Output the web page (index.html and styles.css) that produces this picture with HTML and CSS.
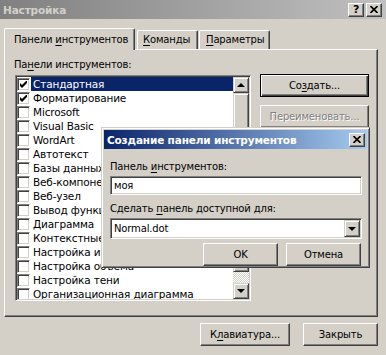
FILE: index.html
```html
<!DOCTYPE html>
<html lang="ru">
<head>
  <meta charset="UTF-8">
  <title>Настройка</title>
  <link rel="stylesheet" href="styles.css">
</head>
<body>
<div class="window">
  <div class="titlebar">
    <span class="title">Настройка</span>
    <div class="caption-buttons">
      <span class="cap-btn help">?</span>
      <span class="cap-btn">
        <svg width="8" height="7" viewBox="0 0 8 7"><path d="M0.5 0 L7.5 7 M7.5 0 L0.5 7" stroke="#000" stroke-width="1.6"/></svg>
      </span>
    </div>
  </div>

  <div class="tabs">
    <div class="tab active">Панели <u>и</u>нструментов</div>
    <div class="tab tab-cmd"><u>К</u>оманды</div>
    <div class="tab tab-opt"><u>П</u>араметры</div>
  </div>

  <div class="panel">
    <div class="label">Па<u>н</u>ели инструментов:</div>
    <div class="panel-row">
      <div class="listbox">
        <ul class="items">
          <li class="selected"><span class="check on"></span><span class="text">Стандартная</span></li>
          <li><span class="check on"></span><span class="text">Форматирование</span></li>
          <li><span class="check"></span><span class="text">Microsoft</span></li>
          <li><span class="check"></span><span class="text">Visual Basic</span></li>
          <li><span class="check"></span><span class="text">WordArt</span></li>
          <li><span class="check"></span><span class="text">Автотекст</span></li>
          <li><span class="check"></span><span class="text">Базы данных</span></li>
          <li><span class="check"></span><span class="text">Веб-компоненты</span></li>
          <li><span class="check"></span><span class="text">Веб-узел</span></li>
          <li><span class="check"></span><span class="text">Вывод функциональных клавиш</span></li>
          <li><span class="check"></span><span class="text">Диаграмма</span></li>
          <li><span class="check"></span><span class="text">Контекстные меню</span></li>
          <li><span class="check"></span><span class="text">Настройка изображения</span></li>
          <li><span class="check"></span><span class="text">Настройка объема</span></li>
          <li><span class="check"></span><span class="text">Настройка тени</span></li>
          <li><span class="check"></span><span class="text">Организационная диаграмма</span></li>
        </ul>
        <div class="scrollbar">
          <div class="sb-btn"><span class="arrow-up"></span></div>
          <div class="sb-thumb"></div>
          <div class="sb-track"></div>
          <div class="sb-btn"><span class="arrow-down"></span></div>
        </div>
      </div>
      <div class="side-buttons">
        <button class="btn default">Со<u>з</u>дать...</button>
        <button class="btn" disabled>Переименовать...</button>
      </div>
    </div>
  </div>

  <div class="footer">
    <button class="btn btn-kbd">К<u>л</u>авиатура...</button>
    <button class="btn btn-close">Закрыть</button>
  </div>

  <!-- диалог поверх окна -->
  <div class="dialog">
    <div class="dlg-title">
      <span>Создание панели инструментов</span>
      <span class="cap-btn">
        <svg width="8" height="7" viewBox="0 0 8 7"><path d="M0.5 0 L7.5 7 M7.5 0 L0.5 7" stroke="#000" stroke-width="1.6"/></svg>
      </span>
    </div>
    <div class="dlg-body">
      <div class="dlg-label">Панель <u>и</u>нструментов:</div>
      <div class="field">моя</div>
      <div class="dlg-label second">Сделать <u>п</u>анель доступной для:</div>
      <div class="field combo">
        <span>Normal.dot</span>
        <span class="sb-btn combo-btn"><span class="arrow-down"></span></span>
      </div>
      <div class="dlg-buttons">
        <button class="btn">OK</button>
        <button class="btn">Отмена</button>
      </div>
    </div>
  </div>
</div>
</body>
</html>
```

FILE: styles.css
```css
* {
  box-sizing: border-box;
}

body {
  margin: 0;
  background: #d4d0c8;
  font-family: "DejaVu Sans", sans-serif;
  font-size: 10px;
  letter-spacing: -0.15px;
  color: #000;
}

u {
  text-decoration-thickness: 1px;
  text-underline-offset: 2px;
}

.window {
  position: relative;
  width: 386px;
  height: 355px;
  background: #d4d0c8;
}

.titlebar {
  height: 19px;
  display: flex;
  align-items: center;
  justify-content: space-between;
  padding: 0 4px 0 3px;
  background: linear-gradient(to right, #808080, #c0c0c0);
}

.title {
  font-weight: bold;
  font-size: 10.5px;
  color: #d4d0c8;
}

.caption-buttons {
  display: flex;
  gap: 2px;
}

.cap-btn {
  width: 16px;
  height: 14px;
  display: flex;
  align-items: center;
  justify-content: center;
  background: #d4d0c8;
  border: 1px solid;
  border-color: #fff #404040 #404040 #fff;
  box-shadow: inset -1px -1px #808080;
}

.help {
  font-weight: bold;
  font-size: 11px;
  line-height: 1;
}

/* вкладки */
.tabs {
  height: 30px;
  display: flex;
  align-items: flex-end;
  padding-left: 4px;
}

.tab {
  position: relative;
  height: 19px;
  padding: 3px 0 0 7px;
  white-space: nowrap;
  background: #d4d0c8;
  border: 1px solid;
  border-bottom: none;
  border-color: #fff #404040 #404040 #fff;
  border-radius: 2px 2px 0 0;
  box-shadow: inset -1px 0 #808080;
}

.tab.active {
  width: 131px;
  height: 22px;
  margin-bottom: -1px;
  padding: 5px 0 0 9px;
  z-index: 1;
}

.tab-cmd {
  width: 61px;
  margin-left: 2px;
  padding-left: 5px;
}

.tab-opt {
  width: 71px;
  margin-left: 1px;
  padding-left: 6px;
}

.panel {
  margin-left: 4px;
  width: 374px;
  height: 268px;
  border: 1px solid;
  border-color: #fff #404040 #404040 #fff;
  box-shadow: inset -1px -1px #808080;
  padding: 8px 0 0 10px;
}

.label {
  height: 13px;
  line-height: 13px;
  margin: 0 0 4px -1px;
}

.panel-row {
  display: flex;
  gap: 9px;
}

/* список */
.listbox {
  width: 236px;
  height: 226px;
  display: flex;
  padding: 1px;
  background: #fff;
  border: 1px solid;
  border-color: #808080 #fff #fff #808080;
  box-shadow: inset 1px 1px #404040, inset -1px -1px #d4d0c8;
  overflow: hidden;
}

.items {
  list-style: none;
  margin: 0;
  padding: 0;
  flex: 1;
  overflow: hidden;
}

.items li {
  height: 14px;
  display: flex;
  align-items: center;
  white-space: nowrap;
}

.check {
  flex: none;
  width: 13px;
  height: 13px;
  margin-right: 1px;
  background: #fff;
  border: 1px solid;
  border-color: #808080 #fff #fff #808080;
  box-shadow: inset 1px 1px #404040, inset -1px -1px #d4d0c8;
}

.check.on {
  background: #fff url("data:image/svg+xml;utf8,<svg xmlns='http://www.w3.org/2000/svg' width='7' height='7'><path d='M0 2 L2 4 L7 -1 L7 2 L2 7 L0 5 Z' fill='black'/></svg>") no-repeat 2px 2px;
}

.text {
  height: 14px;
  line-height: 14px;
  padding: 0 2px;
  font-size: 10.5px;
}

.selected .text {
  flex: 1;
  background: #0a246a;
  color: #fff;
}

.scrollbar {
  width: 16px;
  display: flex;
  flex-direction: column;
}

.sb-btn {
  width: 16px;
  height: 16px;
  flex: none;
  display: flex;
  align-items: center;
  justify-content: center;
  background: #d4d0c8;
  border: 1px solid;
  border-color: #d4d0c8 #404040 #404040 #d4d0c8;
  box-shadow: inset 1px 1px #fff, inset -1px -1px #808080;
}

.arrow-up,
.arrow-down {
  width: 0;
  height: 0;
  border-left: 4px solid transparent;
  border-right: 4px solid transparent;
}

.arrow-up {
  border-bottom: 4px solid #000;
}

.arrow-down {
  border-top: 4px solid #000;
}

.sb-thumb {
  height: 179px;
  background: #d4d0c8;
  border: 1px solid;
  border-color: #d4d0c8 #404040 #404040 #d4d0c8;
  box-shadow: inset 1px 1px #fff, inset -1px -1px #808080;
}

.sb-track {
  flex: 1;
  background: repeating-conic-gradient(#fff 0 25%, #d4d0c8 0 50%) 0 0 / 2px 2px;
}

/* кнопки */
.btn {
  height: 23px;
  padding: 0;
  font-family: inherit;
  font-size: 10px;
  letter-spacing: -0.15px;
  color: #000;
  background: #d4d0c8;
  border: 1px solid;
  border-color: #fff #404040 #404040 #fff;
  box-shadow: inset -1px -1px #808080;
}

.btn.default {
  border-color: #000;
  box-shadow: inset 1px 1px #fff, inset -1px -1px #404040, inset -2px -2px #808080;
}

.btn:disabled {
  color: #808080;
  text-shadow: 1px 1px #fff;
}

.side-buttons {
  display: flex;
  flex-direction: column;
  gap: 8px;
  margin-top: -1px;
}

.side-buttons .btn {
  width: 109px;
}

.footer {
  display: flex;
  justify-content: flex-end;
  gap: 13px;
  padding: 6px 8px 0 0;
}

.btn-kbd {
  width: 90px;
}

.btn-close {
  width: 75px;
}

/* диалог "Создание панели инструментов" */
.dialog {
  position: absolute;
  left: 101px;
  top: 127px;
  width: 269px;
  height: 141px;
  padding: 2px;
  background: #d4d0c8;
  border: 1px solid;
  border-color: #d4d0c8 #404040 #404040 #d4d0c8;
  box-shadow: inset 1px 1px #fff, inset -1px -1px #808080;
  z-index: 2;
}

.dlg-title {
  height: 19px;
  display: flex;
  align-items: center;
  justify-content: space-between;
  padding: 0 2px 0 3px;
  font-weight: bold;
  font-size: 10.5px;
  color: #fff;
  background: linear-gradient(to right, #0a246a, #a6caf0);
}

.dlg-body {
  padding: 11px 5px 0 6px;
}

.dlg-label {
  height: 13px;
  line-height: 13px;
}

.dlg-label.second {
  margin-top: 7px;
}

.field {
  height: 19px;
  margin-top: 3px;
  padding: 2px 3px;
  line-height: 14px;
  background: #fff;
  border: 1px solid;
  border-color: #808080 #fff #fff #808080;
  box-shadow: inset 1px 1px #404040, inset -1px -1px #d4d0c8;
}

.field.combo {
  height: 21px;
  display: flex;
  align-items: center;
  justify-content: space-between;
  padding: 1px 1px 1px 3px;
}

.combo-btn {
  height: 17px;
}

.dlg-buttons {
  display: flex;
  justify-content: flex-end;
  gap: 8px;
  margin-top: 4px;
  padding-right: 1px;
}

.dlg-buttons .btn {
  width: 75px;
}
```
